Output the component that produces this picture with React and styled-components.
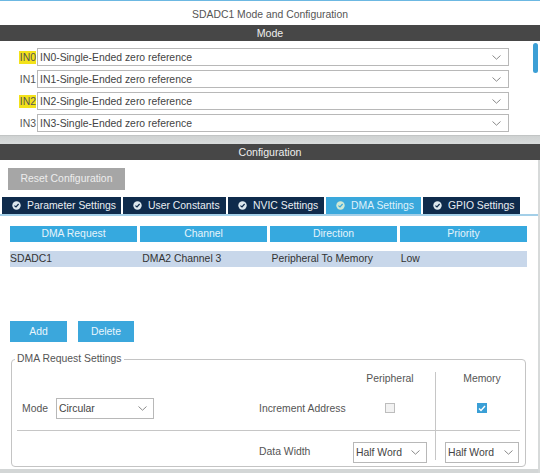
import React from "react";
import styled, { createGlobalStyle } from "styled-components";

const Global = createGlobalStyle`
  html, body { margin: 0; padding: 0; background: #fff; }
  body { font-family: "Liberation Sans", Arial, sans-serif; font-size: 10.4px; color: #444; }
  * { box-sizing: border-box; }
`;

const Page = styled.div`
  width: 540px;
  height: 473px;
  overflow: hidden;
  border-top: 1px solid #6cb8e2;
  background: #fff;
`;

const Title = styled.div`
  height: 24px;
  line-height: 27px;
  text-align: center;
  color: #555;
`;

const SectionBar = styled.div`
  height: 16px;
  line-height: 16px;
  background: #474747;
  color: #eeeeee;
  text-align: center;
  font-size: 10.6px;
`;

const ModePanel = styled.div`
  height: 94px;
  display: flex;
`;

const ModeRows = styled.div`
  flex: 1;
  display: flex;
  flex-direction: column;
  gap: 4px;
  padding-top: 7px;
`;

const ModeRow = styled.div`
  display: flex;
  align-items: center;
  height: 18px;
`;

const PinLabel = styled.div`
  width: 37px;
  text-align: right;
  padding-right: 1px;
  color: #555;
`;

const PinText = styled.span`
  background: ${(p) => (p.$hl ? "#f3e21a" : "transparent")};
  padding: 1px 0 1px 1px;
`;

const SelectBox = styled.div`
  width: ${(p) => p.$w}px;
  height: ${(p) => p.$h}px;
  border: 1px solid #b8b8b8;
  background: #fff;
  display: flex;
  align-items: center;
  justify-content: space-between;
  padding: 0 ${(p) => p.$pr || 7}px 0 2px;
  color: #444;
  white-space: nowrap;
`;

const ScrollTrack = styled.div`
  width: 10px;
  padding: 2px 2px 0 3px;
`;

const ScrollThumb = styled.div`
  width: 5px;
  height: 30px;
  border-radius: 3px;
  background: #3c9fd5;
`;

const Band = styled.div`
  height: 9px;
  background: linear-gradient(#cfd2d2, #d9dcdc);
  border-top: 1px solid #c2c5c5;
`;

const Config = styled.div`
  display: flex;
  flex-direction: column;
  padding-top: 8px;
  border-right: 2px solid #d7dada;
`;

const ResetButton = styled.div`
  margin-left: 8px;
  width: 117px;
  height: 22px;
  line-height: 22px;
  text-align: center;
  background: #a6a6a6;
  color: #ededed;
`;

const Tabs = styled.div`
  margin-top: 7px;
  display: flex;
  gap: 2px;
  padding-left: 2px;
  border-bottom: 2px solid #a3cfe8;
`;

const Tab = styled.div`
  width: ${(p) => p.$w}px;
  height: 17px;
  display: flex;
  align-items: center;
  gap: 6px;
  padding-left: 10px;
  background: ${(p) => (p.$active ? "#3aa8dc" : "#0f2b4c")};
  color: ${(p) => (p.$active ? "#dff1fa" : "#e9eef3")};
  white-space: nowrap;
`;

const Table = styled.div`
  margin: 10px 0 0 10px;
  width: 517px;
  display: flex;
  flex-direction: column;
  gap: 9px;
`;

const TRow = styled.div`
  display: grid;
  grid-template-columns: repeat(4, 1fr);
  column-gap: ${(p) => (p.$head ? 3 : 0)}px;
  height: 16px;
  background: ${(p) => (p.$head ? "transparent" : "#c8d7ea")};
`;

const HeadCell = styled.div`
  background: #36a9df;
  color: #e6f4fb;
  text-align: center;
  line-height: 16px;
`;

const Cell = styled.div`
  line-height: 16px;
  color: #333;
  padding-left: ${(p) => (p.$first ? 0 : 3)}px;
`;

const Buttons = styled.div`
  margin: 54px 0 0 10px;
  display: flex;
  gap: 11px;
`;

const BlueButton = styled.div`
  width: ${(p) => p.$w}px;
  height: 21px;
  line-height: 21px;
  text-align: center;
  background: #3ba7dc;
  color: #e9f6fc;
`;

const Fieldset = styled.fieldset`
  margin: 10px 0 0 11px;
  width: 515px;
  border: 1px solid #c4c4c4;
  border-radius: 4px;
  padding: 5px 5px 0 5px;
`;

const Legend = styled.legend`
  padding: 0 2px;
  margin-left: -2px;
  line-height: 14px;
  color: #555;
`;

const SettingsGrid = styled.div`
  display: grid;
  grid-template-columns: 242px 90px 82px 4px 1px 84px;
  grid-template-rows: 15px 44px 1px 35px;
  align-items: center;
`;

const ColHead = styled.div`
  grid-row: 1;
  grid-column: ${(p) => p.$col};
  text-align: center;
  color: #555;
  padding-left: ${(p) => p.$pl || 0}px;
`;

const ModeField = styled.div`
  grid-row: 2;
  grid-column: 1;
  display: flex;
  align-items: center;
  gap: 8px;
  padding-left: 5px;
  color: #555;
`;

const FieldLabel = styled.div`
  grid-row: ${(p) => p.$row};
  grid-column: 2;
  align-self: ${(p) => (p.$top ? "start" : "center")};
  margin-top: ${(p) => (p.$top ? 15 : 0)}px;
  color: #555;
  white-space: nowrap;
`;

const CellCenter = styled.div`
  grid-row: ${(p) => p.$row};
  grid-column: ${(p) => p.$col};
  align-self: ${(p) => (p.$top ? "start" : "center")};
  margin-top: ${(p) => (p.$top ? 11 : 0)}px;
  display: flex;
  justify-content: center;
  padding-left: ${(p) => p.$pl || 0}px;
`;

const VDivider = styled.div`
  grid-row: 1 / 5;
  grid-column: 5;
  align-self: stretch;
  background: #c6c6c6;
  margin: 1px 0 6px;
`;

const HLine = styled.div`
  grid-row: 3;
  grid-column: 1 / -1;
  height: 1px;
  background: #c6c6c6;
`;

const Checkbox = styled.div`
  width: 10px;
  height: 10px;
  border: 1px solid ${(p) => (p.$checked ? "#3a9fd6" : "#bdbdbd")};
  background: ${(p) => (p.$checked ? "#3a9fd6" : "#f2f2f2")};
  display: flex;
  align-items: center;
  justify-content: center;
`;

const BottomBand = styled.div`
  margin-top: 2px;
  height: 4px;
  background: #d3d6d6;
`;

const Chevron = () => (
  <svg width="9" height="5" viewBox="0 0 9 5">
    <polyline points="0.5,0.5 4.5,4.2 8.5,0.5" fill="none" stroke="#8a8a8a" strokeWidth="1" />
  </svg>
);

const TabIcon = ({ active }) => (
  <svg width="9" height="9" viewBox="0 0 9 9">
    <circle cx="4.5" cy="4.5" r="4.2" fill={active ? "#cfe9d4" : "#dde8ef"} />
    <polyline points="2.4,4.6 4,6 6.6,3" fill="none" stroke={active ? "#3aa8dc" : "#0f2b4c"} strokeWidth="1.2" />
  </svg>
);

const pins = [
  { id: "IN0", hl: true },
  { id: "IN1", hl: false },
  { id: "IN2", hl: true },
  { id: "IN3", hl: false },
];

const tabs = [
  { label: "Parameter Settings", w: 119 },
  { label: "User Constants", w: 103 },
  { label: "NVIC Settings", w: 96 },
  { label: "DMA Settings", w: 95, active: true },
  { label: "GPIO Settings", w: 97 },
];

export default function App() {
  return (
    <>
      <Global />
      <Page>
        <Title>SDADC1 Mode and Configuration</Title>
        <SectionBar>Mode</SectionBar>
        <ModePanel>
          <ModeRows>
            {pins.map((p) => (
              <ModeRow key={p.id}>
                <PinLabel>
                  <PinText $hl={p.hl}>{p.id}</PinText>
                </PinLabel>
                <SelectBox $w={472} $h={18}>
                  <span>{p.id}-Single-Ended zero reference</span>
                  <Chevron />
                </SelectBox>
              </ModeRow>
            ))}
          </ModeRows>
          <ScrollTrack>
            <ScrollThumb />
          </ScrollTrack>
        </ModePanel>
        <Band />
        <SectionBar>Configuration</SectionBar>
        <Config>
          <ResetButton>Reset Configuration</ResetButton>
          <Tabs>
            {tabs.map((t) => (
              <Tab key={t.label} $w={t.w} $active={t.active}>
                <TabIcon active={t.active} />
                <span>{t.label}</span>
              </Tab>
            ))}
          </Tabs>
          <Table>
            <TRow $head>
              <HeadCell>DMA Request</HeadCell>
              <HeadCell>Channel</HeadCell>
              <HeadCell>Direction</HeadCell>
              <HeadCell>Priority</HeadCell>
            </TRow>
            <TRow>
              <Cell $first>SDADC1</Cell>
              <Cell>DMA2 Channel 3</Cell>
              <Cell>Peripheral To Memory</Cell>
              <Cell>Low</Cell>
            </TRow>
          </Table>
          <Buttons>
            <BlueButton $w={57}>Add</BlueButton>
            <BlueButton $w={56}>Delete</BlueButton>
          </Buttons>
          <Fieldset>
            <Legend>DMA Request Settings</Legend>
            <SettingsGrid>
              <ColHead $col={3}>Peripheral</ColHead>
              <ColHead $col={6} $pl={8}>Memory</ColHead>
              <ModeField>
                <span>Mode</span>
                <SelectBox $w={98} $h={21} $pr={6}>
                  <span>Circular</span>
                  <Chevron />
                </SelectBox>
              </ModeField>
              <FieldLabel $row={2}>Increment Address</FieldLabel>
              <CellCenter $row={2} $col={3}>
                <Checkbox />
              </CellCenter>
              <CellCenter $row={2} $col={6} $pl={8}>
                <Checkbox $checked>
                  <svg width="8" height="7" viewBox="0 0 8 7">
                    <polyline points="1,3.5 3,5.5 7,1" fill="none" stroke="#fff" strokeWidth="1.4" />
                  </svg>
                </Checkbox>
              </CellCenter>
              <VDivider />
              <HLine />
              <FieldLabel $row={4} $top>Data Width</FieldLabel>
              <CellCenter $row={4} $col={3} $top>
                <SelectBox $w={74} $h={21} $pr={6}>
                  <span>Half Word</span>
                  <Chevron />
                </SelectBox>
              </CellCenter>
              <CellCenter $row={4} $col={6} $pl={8} $top>
                <SelectBox $w={74} $h={21} $pr={5}>
                  <span>Half Word</span>
                  <Chevron />
                </SelectBox>
              </CellCenter>
            </SettingsGrid>
          </Fieldset>
          <BottomBand />
        </Config>
      </Page>
    </>
  );
}
